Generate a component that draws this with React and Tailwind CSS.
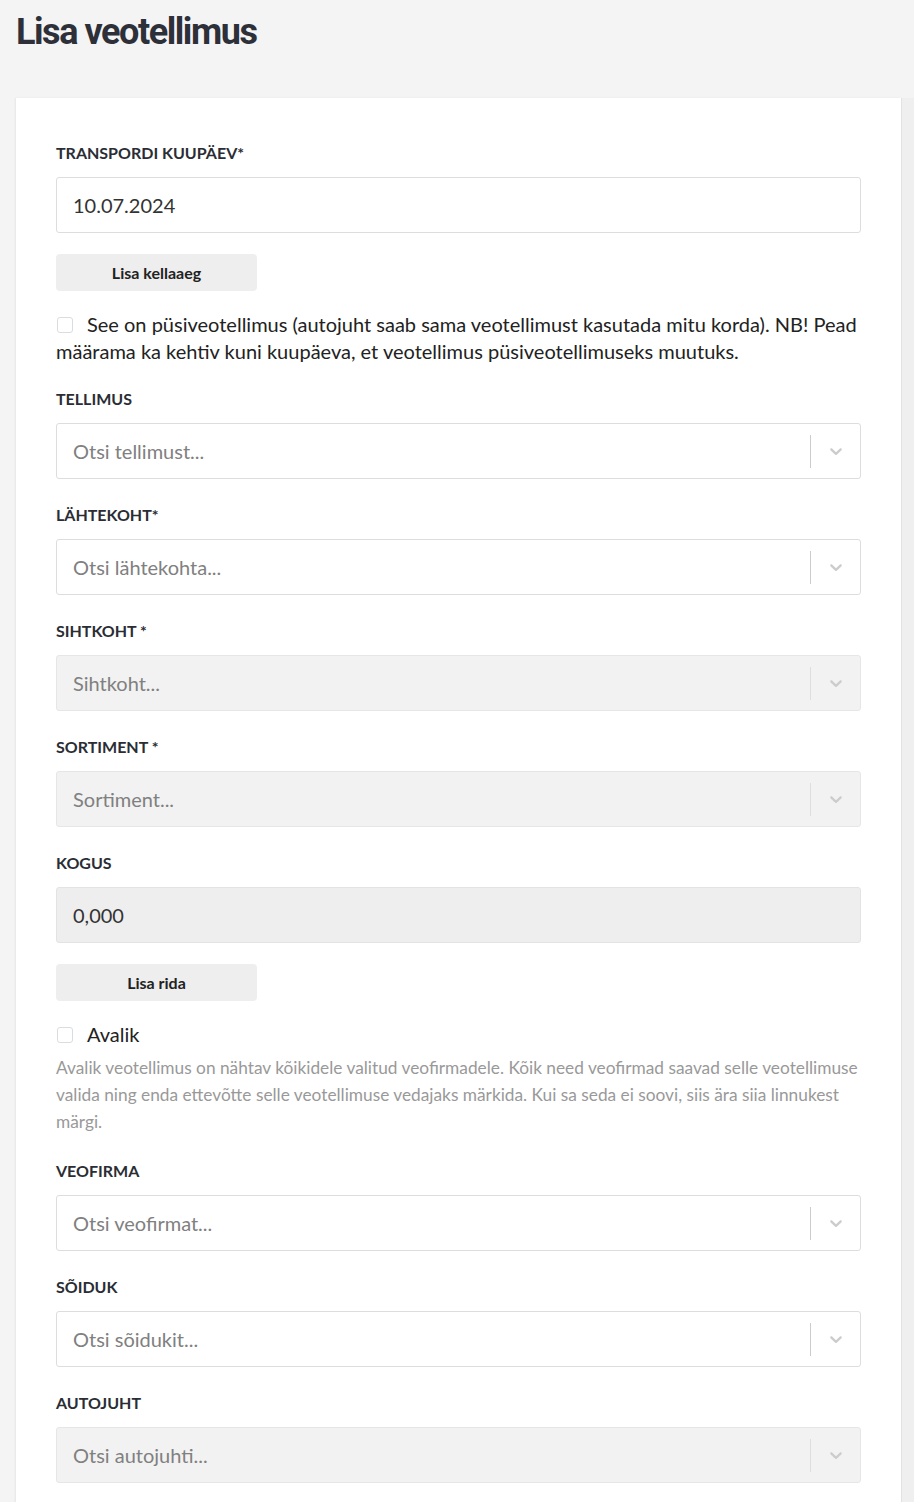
import React from 'react';

const Chevron = () => (
    <svg viewBox="0 0 20 20" className="w-5 h-5 fill-[#cccccc]">
        <path d="M4.516 7.548c0.436-0.446 1.043-0.481 1.576 0l3.908 3.747 3.908-3.747c0.533-0.481 1.141-0.446 1.574 0 0.436 0.445 0.408 1.197 0 1.615-0.406 0.418-4.695 4.502-4.695 4.502-0.217 0.223-0.502 0.335-0.787 0.335s-0.57-0.112-0.789-0.335c0 0-4.287-4.084-4.695-4.502s-0.436-1.17 0-1.615z" />
    </svg>
);

function Label({ children }) {
    return <div className="text-[16px] leading-6 font-bold uppercase text-[#2a2d34] mb-3">{children}</div>;
}

function Select({ label, placeholder, disabled }) {
    return (
        <div className="mb-6">
            <Label>{label}</Label>
            <div
                className={`h-14 flex items-center rounded-[3px] border ${disabled ? 'bg-[#f2f2f2] border-[#e6e6e6]' : 'bg-white border-[#dddddd]'}`}
            >
                <div className="flex-1 pl-4 text-[20px] text-[#808080]">{placeholder}</div>
                <div className={`w-px h-[33px] ${disabled ? 'bg-[#dedede]' : 'bg-[#cccccc]'}`} />
                <div className="w-[49px] flex justify-center">
                    <Chevron />
                </div>
            </div>
        </div>
    );
}

function Checkbox() {
    return <span className="inline-block align-[-1px] w-4 h-4 mr-[14px] ml-px rounded-[3px] border border-[#d9dce1] bg-white" />;
}

function GrayButton({ children }) {
    return (
        <div className="w-[201px] h-[37px] rounded bg-[#eeeeee] flex items-center justify-center text-[16px] font-bold text-[#222]">
            {children}
        </div>
    );
}

export default function App() {
    return (
        <div className="min-h-screen bg-[#f4f4f4] font-['Lato','Liberation_Sans',sans-serif]">
            <h1 className="pl-4 pt-[12px] h-[98px] text-[36px] leading-[40px] font-bold tracking-[-0.04em] text-[#2d3038] font-['Roboto','Liberation_Sans',sans-serif]">
                Lisa veotellimus
            </h1>

            <div className="flex pl-4">
                <div className="flex-1 bg-white px-10 pt-[43px] pb-10 shadow-[-1px_0_2px_rgba(0,0,0,0.06)]">
                    {/* Transpordi kuupäev */}
                    <Label>Transpordi kuupäev*</Label>
                    <div className="mt-px h-14 flex items-center pl-4 rounded-[3px] border border-[#dddddd] text-[20px] text-[#333]">
                        10.07.2024
                    </div>
                    <div className="mt-[21px]">
                        <GrayButton>Lisa kellaaeg</GrayButton>
                    </div>
                    <p className="mt-5 mb-[22px] text-[20px] leading-[27px] text-[#222]">
                        <Checkbox />
                        See on püsiveotellimus (autojuht saab sama veotellimust kasutada mitu korda). NB! Pead määrama ka kehtiv kuni kuupäeva, et veotellimus püsiveotellimuseks muutuks.
                    </p>

                    <Select label="Tellimus" placeholder="Otsi tellimust..." />
                    <Select label="Lähtekoht*" placeholder="Otsi lähtekohta..." />
                    <Select label="Sihtkoht *" placeholder="Sihtkoht..." disabled />
                    <Select label="Sortiment *" placeholder="Sortiment..." disabled />

                    <Label>Kogus</Label>
                    <div className="h-14 flex items-center pl-4 rounded-[3px] border border-[#e3e3e3] bg-[#eeeeee] text-[20px] text-[#333]">
                        0,000
                    </div>
                    <div className="mt-[21px]">
                        <GrayButton>Lisa rida</GrayButton>
                    </div>
                    <p className="mt-5 text-[20px] leading-[27px] text-[#222]">
                        <Checkbox />
                        Avalik
                    </p>
                    <p className="mt-[6px] mb-6 text-[17.3px] leading-[27px] text-[#999999]">
                        Avalik veotellimus on nähtav kõikidele valitud veofirmadele. Kõik need veofirmad saavad selle veotellimuse valida ning enda ettevõtte selle veotellimuse vedajaks märkida. Kui sa seda ei soovi, siis ära siia linnukest märgi.
                    </p>

                    <Select label="Veofirma" placeholder="Otsi veofirmat..." />
                    <Select label="Sõiduk" placeholder="Otsi sõidukit..." />
                    <Select label="Autojuht" placeholder="Otsi autojuhti..." disabled />
                </div>
                <div className="w-[13px] bg-[#efefef] border-l border-[#e2e2e2]" />
            </div>
        </div>
    );
}
